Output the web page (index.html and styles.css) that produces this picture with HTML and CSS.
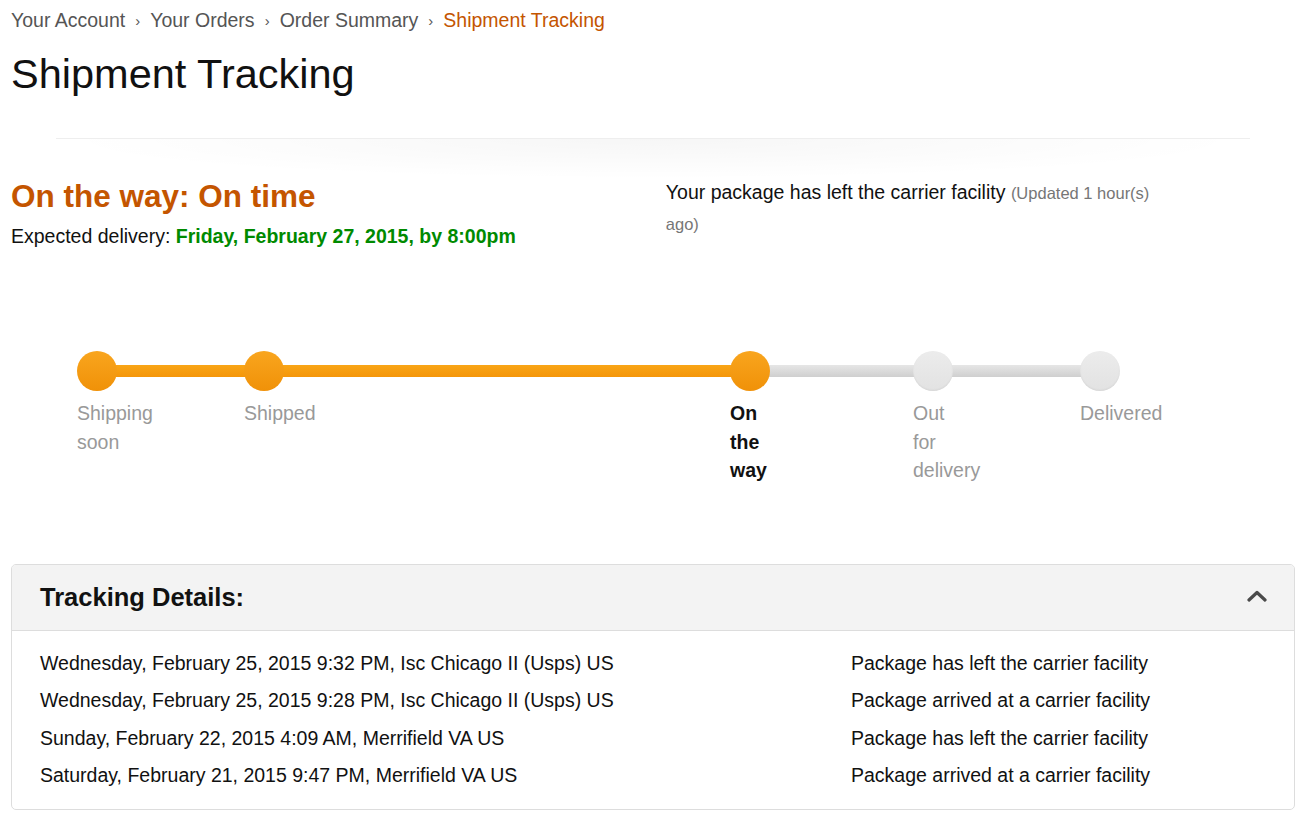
FILE: index.html
```html
<!DOCTYPE html>
<html lang="en">
<head>
  <meta charset="UTF-8" />
  <title>Shipment Tracking</title>
  <link rel="stylesheet" href="styles.css">
</head>
<body>
  <div class="page">
    <ul class="breadcrumb">
      <li><a href="#">Your Account</a></li>
      <li class="sep">›</li>
      <li><a href="#">Your Orders</a></li>
      <li class="sep">›</li>
      <li><a href="#">Order Summary</a></li>
      <li class="sep">›</li>
      <li class="current">Shipment Tracking</li>
    </ul>

    <h1>Shipment Tracking</h1>

    <div class="divider"></div>

    <div class="status">
      <div class="status-left">
        <h2>On the way: On time</h2>
        <p class="expected">Expected delivery: <b>Friday, February 27, 2015, by 8:00pm</b></p>
      </div>
      <div class="status-right">
        Your package has left the carrier facility <span class="updated">(Updated 1 hour(s) ago)</span>
      </div>
    </div>

    <div class="tracker">
      <div class="dot done c1"></div>
      <div class="bar done c2"></div>
      <div class="dot done c3"></div>
      <div class="bar done c4"></div>
      <div class="dot done c5"></div>
      <div class="bar c6"></div>
      <div class="dot c7"></div>
      <div class="bar c8"></div>
      <div class="dot c9"></div>

      <div class="label c1">Shipping soon</div>
      <div class="label c3">Shipped</div>
      <div class="label current c5">On the way</div>
      <div class="label c7">Out for delivery</div>
      <div class="label c9">Delivered</div>
    </div>

    <div class="details">
      <div class="details-head">
        <h3>Tracking Details:</h3>
        <svg class="chevron" width="20" height="12" viewBox="0 0 20 12">
          <path d="M2 10 L10 2.5 L18 10" fill="none" stroke="#4a4a4a" stroke-width="3.2" stroke-linecap="round" stroke-linejoin="round"/>
        </svg>
      </div>
      <div class="details-body">
        <div class="event">
          <span>Wednesday, February 25, 2015 9:32 PM, Isc Chicago II (Usps) US</span>
          <span>Package has left the carrier facility</span>
        </div>
        <div class="event">
          <span>Wednesday, February 25, 2015 9:28 PM, Isc Chicago II (Usps) US</span>
          <span>Package arrived at a carrier facility</span>
        </div>
        <div class="event">
          <span>Sunday, February 22, 2015 4:09 AM, Merrifield VA US</span>
          <span>Package has left the carrier facility</span>
        </div>
        <div class="event">
          <span>Saturday, February 21, 2015 9:47 PM, Merrifield VA US</span>
          <span>Package arrived at a carrier facility</span>
        </div>
      </div>
    </div>
  </div>
</body>
</html>
```

FILE: styles.css
```css
body {
  margin: 0;
  padding: 0;
  font-family: "Liberation Sans", Arial, sans-serif;
  font-size: 19.5px;
  color: #111;
  background: #fff;
}

.page {
  padding: 0 20px 0 11px;
}

/* breadcrumb */
.breadcrumb {
  list-style: none;
  margin: 0;
  padding: 6px 0 0;
  display: flex;
  align-items: baseline;
  line-height: 28px;
}

.breadcrumb a {
  color: #555;
  text-decoration: none;
}

.breadcrumb .sep {
  color: #555;
  font-size: 15px;
  padding: 0 10px 0 10px;
  position: relative;
  top: -1px;
}

.breadcrumb .current {
  color: #c45500;
}

h1 {
  font-size: 41.5px;
  font-weight: normal;
  line-height: 50px;
  margin: 13px 0 0;
  color: #111;
}

.divider {
  height: 40px;
  margin: 39px 45px 0 45px;
  border-top: 1px solid #eee;
  background: radial-gradient(ellipse 50% 100% at 50% 0, rgba(0, 0, 0, 0.035), rgba(0, 0, 0, 0) 100%);
}

/* status */
.status {
  display: grid;
  grid-template-columns: 48.9% 40.4%;
  column-gap: 2.1%;
  margin-top: -2px;
}

.status-left h2 {
  font-size: 31.5px;
  font-weight: bold;
  color: #c45500;
  line-height: 38px;
  margin: 0;
}

.expected {
  margin: 7px 0 0;
  line-height: 28px;
}

.expected b {
  color: #008a00;
}

.status-right {
  line-height: 30px;
  color: #111;
}

.updated {
  font-size: 16.5px;
  color: #767676;
}

/* progress tracker */
.tracker {
  display: grid;
  grid-template-columns: 40px 127px 40px 446px 40px 143px 40px 127px 40px;
  grid-template-rows: 40px auto;
  row-gap: 8px;
  margin: 101px 0 0 66px;
}

.dot {
  grid-row: 1;
  width: 40px;
  height: 40px;
  border-radius: 50%;
  background: linear-gradient(#ececec, #e2e2e2);
  box-shadow: inset 0 -1px 2px rgba(0, 0, 0, 0.06);
  position: relative;
  z-index: 1;
}

.dot.done {
  background: linear-gradient(#f9a51e, #f09108);
  box-shadow: none;
}

.bar {
  grid-row: 1;
  align-self: center;
  height: 12px;
  margin: 0 -4px;
  background: linear-gradient(#e6e6e6, #cfcfcf);
}

.bar.done {
  background: linear-gradient(#f9a516, #f4960a);
}

.label {
  grid-row: 2;
  width: 40px;
  line-height: 28.5px;
  color: #999;
}

.label.current {
  color: #111;
  font-weight: bold;
}

.c1 { grid-column: 1; }
.c2 { grid-column: 2; }
.c3 { grid-column: 3; }
.c4 { grid-column: 4; }
.c5 { grid-column: 5; }
.c6 { grid-column: 6; }
.c7 { grid-column: 7; }
.c8 { grid-column: 8; }
.c9 { grid-column: 9; }

/* tracking details */
.details {
  margin-top: 79px;
  border: 1px solid #ddd;
  border-radius: 5px;
  overflow: hidden;
}

.details-head {
  display: flex;
  justify-content: space-between;
  align-items: center;
  height: 65px;
  padding: 0 27px 0 28px;
  background: #f3f3f3;
  border-bottom: 1px solid #ddd;
}

.details-head h3 {
  margin: 0;
  font-size: 25.5px;
  font-weight: bold;
}

.chevron {
  display: block;
  margin-top: -2px;
}

.details-body {
  padding: 14px 28px 14px;
}

.event {
  display: grid;
  grid-template-columns: 811px 1fr;
  line-height: 37.5px;
}
```
